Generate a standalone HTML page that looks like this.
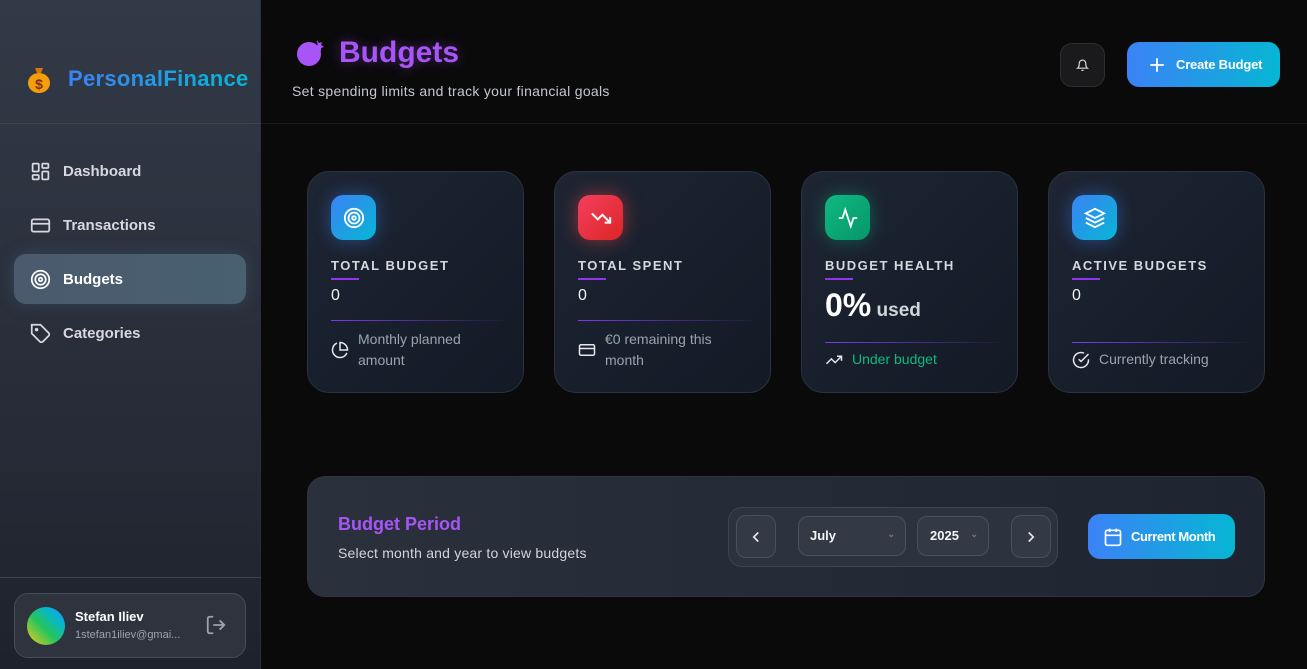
<!DOCTYPE html>
<html><head><meta charset="utf-8"><style>
*{margin:0;padding:0;box-sizing:border-box}
body{width:1307px;height:669px;overflow:hidden;background:#0a0a0b;font-family:"Liberation Sans",sans-serif;color:#e5e7eb;position:relative}
.side{position:absolute;left:0;top:0;width:261px;height:669px;background:linear-gradient(180deg,#333a47 0%,#272c38 60%,#1e222c 100%);border-right:1px solid #2a2f3a}
.logo{position:absolute;left:26px;top:64px;display:flex;align-items:center;gap:16px}
.logo span{font-size:22px;font-weight:bold;background:linear-gradient(90deg,#3b82f6,#06b6d4);-webkit-background-clip:text;color:transparent;letter-spacing:.3px}
.hr1{position:absolute;left:0;top:123px;width:261px;height:1px;background:#3d4350}
.nav{position:absolute;left:14px;width:232px;height:50px;display:flex;align-items:center;padding-left:16px;gap:12px;font-size:15px;font-weight:bold;color:#d6d9de;border-radius:12px}
.nav.act{background:linear-gradient(90deg,#4b5a6e,#48606f);color:#fff;box-shadow:0 0 16px rgba(80,110,140,.35)}
.hr2{position:absolute;left:0;top:577px;width:261px;height:1px;background:#3d4350}
.user{position:absolute;left:14px;top:593px;width:232px;height:65px;border:1px solid #474d58;border-radius:14px;background:#2e333e}
.av{position:absolute;left:12px;top:13px;width:38px;height:38px;border-radius:50%;background:linear-gradient(45deg,#facc15,#22c55e 45%,#06b6d4 75%,#3b82f6)}
.main{position:absolute;left:262px;top:0;right:0;height:669px}
.hdr{position:absolute;left:0;top:0;right:0;height:124px;border-bottom:1px solid #1b1c20}
.card{position:absolute;top:171px;width:217px;height:222px;border-radius:22px;border:1px solid #2a3140;background:linear-gradient(135deg,#1e2533,#131a26)}
.ic{position:absolute;left:23px;top:23px;width:45px;height:45px;border-radius:12px;display:flex;align-items:center;justify-content:center}
.lbl{position:absolute;left:23px;top:86px;font-size:13px;font-weight:bold;letter-spacing:1.5px;color:#d5d8de}
.ul{position:absolute;left:23px;top:106px;width:28px;height:2px;background:#9333ea}
.val{position:absolute;left:23px;top:115px;font-size:16px;color:#f3f4f6}
.dv{position:absolute;left:23px;top:148px;width:175px;height:1px;background:linear-gradient(90deg,#7c3aed,rgba(124,58,237,.05))}
.ft{position:absolute;left:23px;top:157px;display:flex;gap:9px;font-size:14px;line-height:21px;color:#9ca3af;align-items:center}
.panel{position:absolute;left:45px;top:476px;width:958px;height:121px;border-radius:18px;border:1px solid #2e3440;background:linear-gradient(90deg,#2a303c,#1e2430)}
.btn{position:absolute;border-radius:10px;border:1px solid #4a505b;background:#343a45}
</style></head><body>
<div class="side">
 <div class="logo"><svg width="26" height="30" viewBox="0 0 26 30"><path d="M9 4h8l-2 5h-4z" fill="#d97706"/><ellipse cx="13" cy="19" rx="11" ry="10" fill="#f59e0b"/><text x="13" y="25" font-size="14" text-anchor="middle" fill="#7c2d12" font-family="Liberation Sans" font-weight="bold">$</text></svg><span>PersonalFinance</span></div>
 <div class="hr1"></div>
 <div class="nav" style="top:146px"><svg width="21" height="21" viewBox="0 0 24 24" fill="none" stroke="#d6d9de" stroke-width="2"><rect x="3" y="3" width="7" height="9" rx="1"/><rect x="14" y="3" width="7" height="5" rx="1"/><rect x="14" y="12" width="7" height="9" rx="1"/><rect x="3" y="16" width="7" height="5" rx="1"/></svg>Dashboard</div>
 <div class="nav" style="top:200px"><svg width="21" height="21" viewBox="0 0 24 24" fill="none" stroke="#d6d9de" stroke-width="2"><rect x="2" y="5" width="20" height="14" rx="2"/><path d="M2 10h20"/></svg>Transactions</div>
 <div class="nav act" style="top:254px"><svg width="21" height="21" viewBox="0 0 24 24" fill="none" stroke="#fff" stroke-width="2"><circle cx="12" cy="12" r="10"/><circle cx="12" cy="12" r="6"/><circle cx="12" cy="12" r="2"/></svg>Budgets</div>
 <div class="nav" style="top:308px"><svg width="21" height="21" viewBox="0 0 24 24" fill="none" stroke="#d6d9de" stroke-width="2"><path d="M12 2H2v10l9.3 9.3a2.4 2.4 0 0 0 3.4 0l6.6-6.6a2.4 2.4 0 0 0 0-3.4z"/><circle cx="7.5" cy="7.5" r="1"/></svg>Categories</div>
 <div class="hr2"></div>
 <div class="user"><div class="av"></div>
  <div style="position:absolute;left:60px;top:15px;font-size:13px;font-weight:bold;color:#fff">Stefan Iliev</div>
  <div style="position:absolute;left:60px;top:35px;font-size:11px;color:#9ca3af">1stefan1iliev@gmai...</div>
  <svg style="position:absolute;left:190px;top:20px" width="22" height="22" viewBox="0 0 24 24" fill="none" stroke="#9ca3af" stroke-width="2"><path d="M9 21H5a2 2 0 0 1-2-2V5a2 2 0 0 1 2-2h4"/><path d="M16 17l5-5-5-5M21 12H9"/></svg>
 </div>
</div>
<div class="main">
 <div class="hdr">
  <svg style="position:absolute;left:33px;top:36px" width="32" height="32" viewBox="0 0 32 32"><circle cx="14" cy="18" r="12" fill="#a855f7"/><path d="M22 4l2 3 3-1-1 3 3 2-3 1 0 3-3-2" fill="#a855f7"/></svg>
  <div style="position:absolute;left:77px;top:36px;font-size:30px;font-weight:bold;color:#a855f7;text-shadow:0 0 12px rgba(168,85,247,.4)">Budgets</div>
  <div style="position:absolute;left:30px;top:83px;font-size:14px;color:#c4c8cf;letter-spacing:.3px">Set spending limits and track your financial goals</div>
  <div style="position:absolute;left:798px;top:43px;width:45px;height:44px;border-radius:12px;background:#1a1a1c;border:1px solid #2e2e32;display:flex;align-items:center;justify-content:center"><svg width="13" height="13" viewBox="0 0 24 24" fill="none" stroke="#d1d5db" stroke-width="2.2"><path d="M6 8a6 6 0 0 1 12 0c0 7 3 9 3 9H3s3-2 3-9M10 21h4"/></svg></div>
  <div style="position:absolute;left:865px;top:42px;width:153px;height:45px;border-radius:12px;background:linear-gradient(90deg,#3b82f6,#06b6d4);display:flex;align-items:center;padding-left:21px;gap:10px;font-size:13px;font-weight:bold;color:#fff;letter-spacing:-.2px"><svg width="18" height="18" viewBox="0 0 24 24" stroke="#fff" stroke-width="2.4"><path d="M12 3v18M3 12h18"/></svg>Create Budget</div>
 </div>

 <div class="card" style="left:45px"><div class="ic" style="background:linear-gradient(135deg,#3b82f6,#06b6d4);box-shadow:0 0 18px rgba(59,130,246,.45)"><svg width="22" height="22" viewBox="0 0 24 24" fill="none" stroke="#fff" stroke-width="2"><circle cx="12" cy="12" r="10"/><circle cx="12" cy="12" r="6"/><circle cx="12" cy="12" r="2"/></svg></div>
  <div class="lbl">TOTAL BUDGET</div><div class="ul"></div><div class="val">0</div><div class="dv"></div>
  <div class="ft"><svg width="18" height="18" viewBox="0 0 24 24" fill="none" stroke="#e5e7eb" stroke-width="2"><path d="M21.2 15.9A10 10 0 1 1 8 2.8"/><path d="M22 12A10 10 0 0 0 12 2v10z"/></svg><span>Monthly planned<br>amount</span></div></div>

 <div class="card" style="left:292px"><div class="ic" style="background:linear-gradient(135deg,#f43f5e,#dc2626);box-shadow:0 0 18px rgba(239,68,68,.55)"><svg width="22" height="22" viewBox="0 0 24 24" fill="none" stroke="#fff" stroke-width="2.2"><path d="M22 17l-8.5-8.5-5 5L2 7"/><path d="M16 17h6v-6"/></svg></div>
  <div class="lbl">TOTAL SPENT</div><div class="ul"></div><div class="val">0</div><div class="dv"></div>
  <div class="ft"><svg width="18" height="18" viewBox="0 0 24 24" fill="none" stroke="#e5e7eb" stroke-width="2"><rect x="2" y="5" width="20" height="14" rx="2"/><path d="M2 10h20"/></svg><span>€0 remaining this<br>month</span></div></div>

 <div class="card" style="left:539px"><div class="ic" style="background:linear-gradient(135deg,#10b981,#059669);box-shadow:0 0 18px rgba(16,185,129,.4)"><svg width="22" height="22" viewBox="0 0 24 24" fill="none" stroke="#fff" stroke-width="2"><path d="M22 12h-4l-3 9L9 3l-3 9H2"/></svg></div>
  <div class="lbl">BUDGET HEALTH</div><div class="ul"></div>
  <div style="position:absolute;left:23px;top:115px;font-size:32px;font-weight:bold;color:#fff">0%<span style="font-size:19px;color:#d1d5db;font-weight:bold"> used</span></div>
  <div class="dv" style="top:170px"></div>
  <div class="ft" style="top:177px;color:#10b981"><svg width="18" height="18" viewBox="0 0 24 24" fill="none" stroke="#e5e7eb" stroke-width="2"><path d="M22 7l-8.5 8.5-5-5L2 17"/><path d="M16 7h6v6"/></svg>Under budget</div></div>

 <div class="card" style="left:786px"><div class="ic" style="background:linear-gradient(135deg,#3b82f6,#06b6d4);box-shadow:0 0 18px rgba(59,130,246,.45)"><svg width="22" height="22" viewBox="0 0 24 24" fill="none" stroke="#fff" stroke-width="2"><path d="M12 2L2 7l10 5 10-5z"/><path d="M2 12l10 5 10-5M2 17l10 5 10-5"/></svg></div>
  <div class="lbl">ACTIVE BUDGETS</div><div class="ul"></div><div class="val">0</div><div class="dv" style="top:170px"></div>
  <div class="ft" style="top:177px"><svg width="18" height="18" viewBox="0 0 24 24" fill="none" stroke="#e5e7eb" stroke-width="2"><path d="M22 11.1V12a10 10 0 1 1-5.9-9.1"/><path d="M22 4L12 14l-3-3"/></svg>Currently tracking</div></div>

 <div class="panel">
  <div style="position:absolute;left:30px;top:37px;font-size:18px;font-weight:bold;color:#a855f7">Budget Period</div>
  <div style="position:absolute;left:30px;top:68px;font-size:14px;color:#d1d5db;letter-spacing:.2px">Select month and year to view budgets</div>
  <div style="position:absolute;left:420px;top:30px;width:330px;height:60px;border-radius:14px;border:1px solid #3e4450;background:#2d333e"></div>
  <div class="btn" style="left:428px;top:38px;width:40px;height:43px;display:flex;align-items:center;justify-content:center"><svg width="18" height="18" viewBox="0 0 24 24" fill="none" stroke="#e5e7eb" stroke-width="2.2"><path d="M15 18l-6-6 6-6"/></svg></div>
  <div class="btn" style="left:490px;top:39px;width:108px;height:40px;font-size:13px;font-weight:bold;color:#f3f4f6;padding:11px 0 0 11px">July<span style="position:absolute;right:10px;top:12px;font-size:9px;color:#777">⌄</span></div>
  <div class="btn" style="left:609px;top:39px;width:72px;height:40px;font-size:13px;font-weight:bold;color:#f3f4f6;padding:11px 0 0 12px">2025<span style="position:absolute;right:10px;top:12px;font-size:9px;color:#777">⌄</span></div>
  <div class="btn" style="left:703px;top:38px;width:40px;height:43px;display:flex;align-items:center;justify-content:center"><svg width="18" height="18" viewBox="0 0 24 24" fill="none" stroke="#e5e7eb" stroke-width="2.2"><path d="M9 18l6-6-6-6"/></svg></div>
  <div style="position:absolute;left:780px;top:37px;width:147px;height:45px;border-radius:12px;background:linear-gradient(90deg,#3b82f6,#06b6d4);display:flex;align-items:center;padding-left:15px;gap:8px;font-size:13px;font-weight:bold;color:#fff;letter-spacing:-.4px;white-space:nowrap"><svg width="20" height="20" viewBox="0 0 24 24" fill="none" stroke="#fff" stroke-width="2"><rect x="3" y="4" width="18" height="18" rx="2"/><path d="M16 2v4M8 2v4M3 10h18"/></svg>Current Month</div>
 </div>
</div>
</body></html>
